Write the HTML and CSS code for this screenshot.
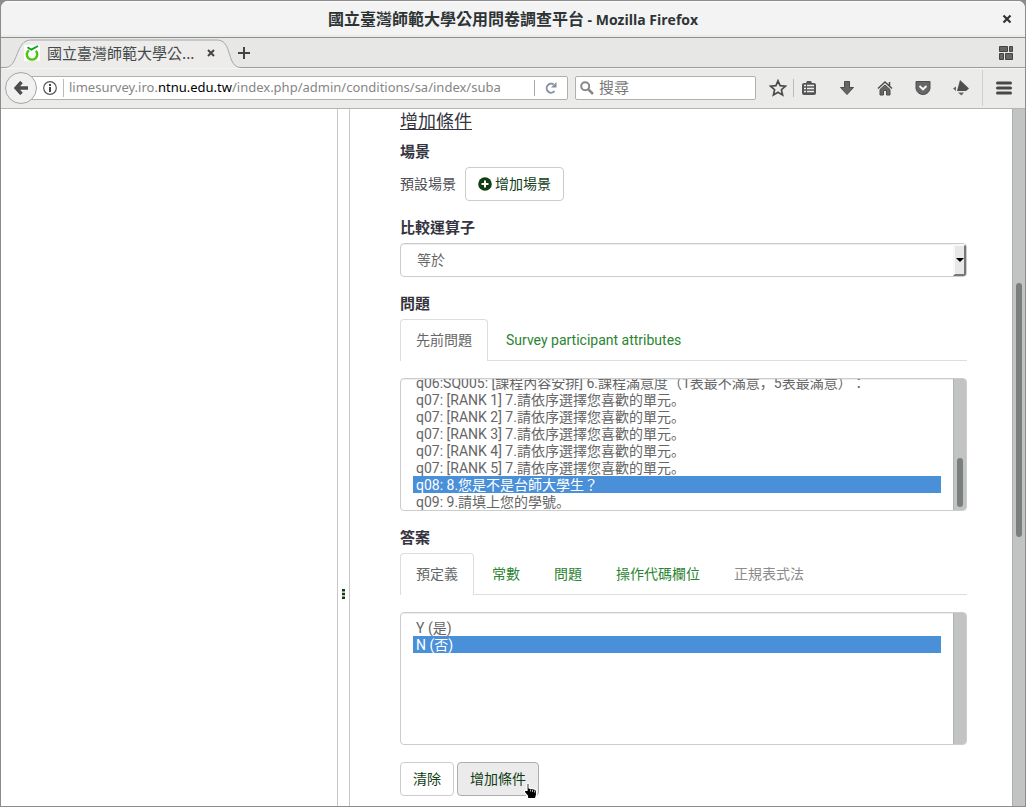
FILE: index.html
```html
<!DOCTYPE html>
<html lang="zh-Hant">
<head>
<meta charset="utf-8">
<title>國立臺灣師範大學公用問卷調查平台</title>
<link rel="stylesheet" href="styles.css">
</head>
<body>
<div class="window">
  <header class="titlebar">
    <span class="titlebar-text"><span class="site-name">國立臺灣師範大學公用問卷調查平台</span> - Mozilla Firefox</span>
    <button class="icon-btn window-close" aria-label="關閉視窗"><svg width="10" height="10" viewBox="0 0 10 10"><path d="M1.5 1.5l7 7M8.500 1.500l-7 7" stroke="#2e3436" stroke-width="2.200" fill="none"/></svg></button>
  </header>

  <div class="tabstrip">
    <div class="browser-tab">
      <svg class="tab-shape" width="236" height="30" viewBox="0 0 236 30" aria-hidden="true"><path d="M0 30V29.500C14 29.500 10 2 26 2H212C228 2 221 29.500 236 29.500V30Z" fill="#edeceb"/><path d="M0 29.500C14 29.500 10 2 26 2H212C228 2 221 29.500 236 29.500" fill="none" stroke="#a3a6ab"/></svg>
      <svg class="favicon" width="16" height="16" viewBox="0 0 16 16" aria-hidden="true"><rect width="16" height="16" fill="#fff"/><path d="M5 5.200A5.200 5.200 0 1 0 11.800 5.800" fill="none" stroke="#4cc50b" stroke-width="2.400"/><path d="M3.500 2.200L7.300 4.700L14 1" fill="none" stroke="#14a01e" stroke-width="1.900"/></svg>
      <span class="tab-title">國立臺灣師範大學公...</span>
      <button class="icon-btn tab-close" aria-label="關閉分頁"><svg width="8" height="8" viewBox="0 0 8 8"><path d="M1 1l6 6M7 1l-6 6" stroke="#444" stroke-width="2" fill="none"/></svg></button>
    </div>
    <button class="icon-btn new-tab" aria-label="開新分頁"><svg width="12" height="12" viewBox="0 0 12 12"><path d="M6 0v12M0 6h12" stroke="#444" stroke-width="2"/></svg></button>
    <button class="icon-btn tab-groups" aria-label="分頁群組"><svg width="14" height="14" viewBox="0 0 14 14" fill="#666" stroke="#444"><path d="M.5.5h8v5h-8zM10.500.5h3v5h-3zM.5 7.500h4v6h-4zM6.500 7.500h7v6h-7z"/></svg></button>
  </div>

  <nav class="toolbar">
    <button class="back" aria-label="上一頁"><svg width="14" height="14" viewBox="0 0 14 14"><path d="M7.500 1L2 7l5.500 6M2 7h12" fill="none" stroke="#4c4c4c" stroke-width="3.400"/></svg></button>
    <div class="urlbar">
      <button class="icon-btn" aria-label="網站資訊"><svg width="14" height="14" viewBox="0 0 14 14"><circle cx="7" cy="7" r="6.300" fill="none" stroke="#555" stroke-width="1.200"/><path d="M7 3v2M7 6v5" stroke="#444" stroke-width="2"/></svg></button>
      <div class="url" role="textbox" contenteditable="true" aria-label="網址" spellcheck="false">limesurvey.iro.<span class="domain">ntnu.edu.tw</span>/index.php/admin/conditions/sa/index/suba</div>
      <button class="icon-btn reload" aria-label="重新載入"><svg width="12" height="12" viewBox="0 0 12 12"><path d="M9.500 9.200A4.500 4.500 0 1 1 8.600 2.400" fill="none" stroke="#8590a0" stroke-width="1.900"/><path d="M11.500 0v5.500H6z" fill="#8590a0"/></svg></button>
    </div>
    <div class="search">
      <svg width="14" height="14" viewBox="0 0 14 14" aria-hidden="true"><circle cx="5.200" cy="5.200" r="4" fill="none" stroke="#888" stroke-width="2"/><path d="M8 8l5 5" stroke="#888" stroke-width="2.500"/></svg>
      <input type="search" placeholder="搜尋" aria-label="搜尋">
    </div>
    <div class="tools">
      <button class="icon-btn" aria-label="加入書籤"><svg width="18" height="18" viewBox="0 0 18 18"><path d="M9 1.800l2.100 4.900 5.300.5-4 3.500 1.200 5.200L9 13.200l-4.600 2.700 1.200-5.200-4-3.500 5.300-.5z" fill="none" stroke="#4c4c4c" stroke-width="1.700"/></svg></button>
      <button class="icon-btn ruled" aria-label="書籤清單"><svg width="16" height="16" viewBox="0 0 16 16"><path d="M3 3h2l1-2h4l1 2h2q2 0 2 2v8q0 2-2 2H3q-2 0-2-2V5q0-2 2-2z" fill="#555"/><path d="M3 5.500h2M6 5.500h7M3 8.500h2M6 8.500h7M3 11.500h2M6 11.500h7" stroke="#eee" stroke-width="1.700"/></svg></button>
      <button class="icon-btn" aria-label="下載"><svg width="16" height="16" viewBox="0 0 16 16"><path d="M5.500 1.500h5v6h4L8 14.500l-6.500-7h4z" fill="#666" stroke="#4c4c4c"/></svg></button>
      <button class="icon-btn" aria-label="首頁"><svg width="16" height="16" viewBox="0 0 16 16"><path d="M3 9.500L8 5l5 4.500v5.500H9.500V10.500h-3V15H3z" fill="#666" stroke="#4c4c4c"/><path d="M1 8.500L8 2l7 6.500M12.500 2v4" fill="none" stroke="#4c4c4c" stroke-width="1.500"/></svg></button>
      <button class="icon-btn" aria-label="Pocket"><svg width="16" height="16" viewBox="0 0 16 16"><path d="M1 1.500h14V8a7 6.500 0 0 1-14 0z" fill="#666" stroke="#4c4c4c"/><path d="M4.500 6L8 9.300 11.500 6" fill="none" stroke="#f2f2f2" stroke-width="2"/></svg></button>
      <button class="icon-btn" aria-label="附加元件"><svg width="18" height="16" viewBox="0 0 18 16"><path d="M8 0L17 8.500L14 11H5z" fill="#4f4f4f"/><path d="M1 8.500L4 6.500V11zM6 12.500h6L9.500 15.500z" fill="#666"/></svg></button>
      <button class="icon-btn menu" aria-label="選單"><svg width="16" height="14" viewBox="0 0 16 14"><path d="M1.500 2h13M1.500 7h13M1.500 12h13" stroke="#484848" stroke-width="3" stroke-linecap="round"/></svg></button>
    </div>
  </nav>

  <div class="page">
    <aside class="sidebar"></aside>
    <div class="splitter" role="separator" aria-orientation="vertical"><svg width="3" height="10" viewBox="0 0 3 10"><path d="M0 0h3v2.500H0zM0 3.800h3v2.500H0zM0 7.500h3V10H0z" fill="#0f3f17"/></svg></div>
    <main class="content">
      <h2 class="heading">增加條件</h2>
      <form class="form">
        <section class="group">
          <h3 class="label">場景</h3>
          <div class="scenario">
            <span>預設場景</span>
            <button type="button" class="btn"><svg width="14" height="14" viewBox="0 0 14 14" aria-hidden="true"><circle cx="7" cy="7" r="6.800" fill="#0f3d14"/><path d="M7 3.500v7M3.500 7h7" stroke="#fff" stroke-width="2"/></svg>增加場景</button>
          </div>
        </section>

        <section class="group">
          <label class="label" for="operator">比較運算子</label>
          <div class="control">
            <select id="operator" class="dropdown"><option>等於</option></select>
            <span class="arrow" aria-hidden="true"></span>
          </div>
        </section>

        <section class="group">
          <label class="label" for="questions">問題</label>
          <div class="tabs">
            <a class="tab active" href="#previous">先前問題</a>
            <a class="tab" href="#attributes">Survey participant attributes</a>
          </div>
          <div class="control spaced">
            <select id="questions" class="listbox" size="8" lang="ja">
              <option>q06:SQ005: [課程內容安排] 6.課程滿意度（1表最不滿意，5表最滿意）：</option>
              <option>q07: [RANK 1] 7.請依序選擇您喜歡的單元。</option>
              <option>q07: [RANK 2] 7.請依序選擇您喜歡的單元。</option>
              <option>q07: [RANK 3] 7.請依序選擇您喜歡的單元。</option>
              <option>q07: [RANK 4] 7.請依序選擇您喜歡的單元。</option>
              <option>q07: [RANK 5] 7.請依序選擇您喜歡的單元。</option>
              <option selected>q08: 8.您是不是台師大學生？</option>
              <option>q09: 9.請填上您的學號。</option>
            </select>
            <span class="track" aria-hidden="true"><span class="thumb"></span></span>
          </div>
        </section>

        <section class="group">
          <label class="label" for="answers">答案</label>
          <div class="tabs">
            <a class="tab active" href="#predefined">預定義</a>
            <a class="tab" href="#constant">常數</a>
            <a class="tab" href="#question">問題</a>
            <a class="tab" href="#token">操作代碼欄位</a>
            <a class="tab disabled" href="#regexp" aria-disabled="true">正規表式法</a>
          </div>
          <div class="control spaced">
            <select id="answers" class="listbox" size="7">
              <option>Y (是)</option>
              <option selected>N (否)</option>
            </select>
            <span class="track" aria-hidden="true"></span>
          </div>
        </section>

        <div class="actions">
          <button type="reset" class="btn">清除</button>
          <button type="button" class="btn hovered">增加條件<svg class="pointer" width="15" height="18" viewBox="0 0 15 18" aria-hidden="true"><path d="M4 1.500q1.200-1 2 .2V6l6 1.200q1.500.6 1.500 2.300V13l-1 3.500H4.500V14L1.500 10.500V8.500H4z" fill="#000" stroke="#fff" stroke-width="1.200"/><path d="M7.500 7.500v2M9.500 8v2M11.500 8.500v2" stroke="#fff" stroke-width=".7"/></svg></button>
        </div>
      </form>
    </main>
    <div class="page-track" aria-hidden="true"><span class="page-thumb"></span></div>
  </div>
</div>
<script src="app.js"></script>
</body>
</html>
```
FILE: styles.css
```css
* { box-sizing: border-box; }

body {
  margin: 0;
  height: 100vh;
  padding: 1px;
  overflow: hidden;
  background: #8c8c8c;
  font-family: Roboto, "Noto Sans CJK TC", sans-serif;
  font-size: 14px;
  line-height: 20px;
  color: #4d4d55;
}

button, input, select { font: inherit; color: inherit; }
svg { display: block; flex: none; }

.window {
  display: flex;
  flex-direction: column;
  height: 100%;
  border-radius: 7px 7px 0 0;
  overflow: hidden;
  background: #fff;
}

.icon-btn {
  display: flex;
  align-items: center;
  justify-content: center;
  flex: none;
  padding: 0;
  border: 0;
  background: none;
}

/* Browser chrome */
.titlebar {
  flex: none;
  display: grid;
  grid-template-columns: 36px 1fr 36px;
  align-items: center;
  height: 37px;
  background: linear-gradient(#fff 0, #f3f3f3 2px, #f3f3f3 33px, #e8e8e7 36px);
  border-bottom: 1px solid #8f8f8e;
}
.titlebar-text {
  grid-column: 2;
  text-align: center;
  white-space: nowrap;
  font-family: "Open Sans", "Noto Sans CJK TC", sans-serif;
  font-size: 14px;
  font-weight: 700;
  color: #2e3436;
}
.site-name { font-size: 16px; }

.tabstrip {
  flex: none;
  display: flex;
  align-items: center;
  height: 30px;
  padding: 0 12px 0 4px;
  background: #e7e7e6;
  border-bottom: 1px solid #9b9b9b;
}
.browser-tab {
  position: relative;
  display: flex;
  align-items: center;
  width: 232px;
  height: 30px;
  margin-top: 1px;
  padding-left: 19px;
}
.tab-shape { position: absolute; left: 0; top: 0; }
.favicon, .tab-title, .tab-close { position: relative; }
.tab-title {
  width: 152px;
  margin-left: 7px;
  white-space: nowrap;
  font-family: "Noto Sans CJK TC", sans-serif;
  font-size: 15px;
  color: #444a4c;
}
.tab-close { width: 24px; height: 24px; }
.new-tab { width: 14px; height: 14px; }
.tab-groups { margin-left: auto; }

.toolbar {
  flex: none;
  display: flex;
  align-items: center;
  height: 41px;
  padding: 0 11px 2px 4px;
  background: #ebebe9;
  border-top: 1px solid #f5f5f4;
  border-bottom: 1px solid #b5b5b2;
}
.back {
  position: relative;
  z-index: 1;
  display: flex;
  align-items: center;
  justify-content: center;
  flex: none;
  width: 32px;
  height: 32px;
  padding: 0;
  border: 1px solid #a5a5a4;
  border-radius: 50%;
  background: #f1f1f1;
}
.urlbar {
  flex: 1;
  min-width: 0;
  display: flex;
  align-items: center;
  height: 24px;
  margin-left: -8px;
  padding-left: 13px;
  background: #fff;
  border: 1px solid #b0b0ad;
  border-radius: 2px;
}
.url {
  flex: 1;
  min-width: 0;
  height: 18px;
  margin: 0 23px 0 6px;
  padding-left: 5px;
  border-left: 1px solid #bbb;
  overflow: hidden;
  white-space: nowrap;
  line-height: 17px;
  font-family: "Noto Sans", sans-serif;
  font-size: 13px;
  color: #858585;
}
.domain { color: #000; }
.reload {
  width: 33px;
  height: 16px;
  border-left: 1px solid #aaa;
}
.search {
  display: flex;
  align-items: center;
  gap: 5px;
  width: 181px;
  height: 24px;
  margin-left: 7px;
  padding-left: 4px;
  background: #fff;
  border: 1px solid #b0b0ad;
  border-radius: 2px;
}
.search input {
  flex: 1;
  min-width: 0;
  height: 20px;
  padding: 0;
  border: 0;
  outline: 0;
  background: none;
  font-size: 15px;
}
.search input::placeholder { color: #777; }
.tools {
  display: flex;
  margin-left: 7px;
}
.tools .icon-btn { width: 38px; height: 36px; }
.tools .icon-btn:first-child { width: 30px; }
.tools .ruled {
  width: 32px;
  margin-right: 3px;
  background: linear-gradient(#bbb, #bbb) 0 center / 1px 18px no-repeat;
}
.tools .menu {
  width: 32px;
  margin-left: 2px;
  padding-left: 10px;
  border-left: 1px solid #d0d0cf;
}

/* Web page */
.page {
  flex: 1;
  min-height: 0;
  display: flex;
  overflow: hidden;
}
.sidebar { flex: none; width: 336px; }
.splitter {
  flex: none;
  display: flex;
  justify-content: center;
  width: 13px;
  padding-top: 480px;
  border: solid #c8c8c8;
  border-width: 0 1px;
}
.content {
  flex: 1;
  min-width: 0;
  padding: 0 45px 0 50px;
  overflow: hidden;
}
.page-track {
  flex: none;
  width: 13px;
  padding: 174px 2px 0 3px;
  background: #c1c4c3;
  border-left: 1px solid #acafae;
}
.page-thumb {
  display: block;
  width: 6px;
  height: 254px;
  border-radius: 3px;
  background: #7a7e7f;
}

.heading {
  margin: 0 0 8px;
  font-size: 18px;
  font-weight: 400;
  line-height: 25px;
  text-decoration: underline;
  color: #35343f;
}
.form {
  display: flex;
  flex-direction: column;
  gap: 17px;
}
.group {
  display: flex;
  flex-direction: column;
}
.label {
  margin: 0 0 5px;
  font-size: 15px;
  font-weight: 700;
  line-height: 20px;
  color: #35343f;
}
.scenario {
  display: flex;
  align-items: center;
  gap: 9px;
}
.btn {
  position: relative;
  display: flex;
  align-items: center;
  gap: 3px;
  height: 34px;
  padding: 0 12px;
  border: 1px solid #ccc;
  border-radius: 4px;
  background: #fff;
  color: #0f3d14;
}
.btn.hovered {
  background: #ebebeb;
  border-color: #adadad;
}
.pointer {
  position: absolute;
  right: 0;
  bottom: -5px;
}

.control {
  display: flex;
  border: 1px solid #ccc;
  border-radius: 4px;
  overflow: hidden;
  background: #fff;
  box-shadow: inset 0 1px 1px #00000013;
  color: #666;
}
.spaced { margin-top: 17px; }
.dropdown {
  flex: 1;
  height: 32px;
  padding: 0 16px;
  appearance: none;
  border: 0;
  background: none;
}
.arrow {
  display: flex;
  align-items: center;
  justify-content: center;
  width: 13px;
  background: #e8e8e7;
  border: 2px solid;
  border-color: #f8f8f8 #777 #777 #f8f8f8;
}
.arrow::before {
  content: "";
  border: solid transparent;
  border-width: 4px 4px 0;
  border-top-color: #000;
}

.tabs {
  display: flex;
  gap: 2px;
  border-bottom: 1px solid #ddd;
}
.tab {
  height: 41px;
  padding: 10px 15px;
  border: 1px solid transparent;
  border-bottom: 0;
  border-radius: 4px 4px 0 0;
  text-decoration: none;
  color: #2b8431;
}
.tab.active {
  height: 42px;
  margin-bottom: -1px;
  border-color: #ddd;
  background: #fff;
  color: #666;
}
.tab.disabled { color: #8c8c8c; }

.listbox {
  flex: 1;
  min-width: 0;
  height: 131px;
  padding: 6px 12px 0;
  border: 0;
  border-radius: 0;
  outline: 0;
  background: none;
  font-family: Roboto, "Noto Sans CJK JP", sans-serif;
  text-spacing-trim: space-all;
  scrollbar-width: none;
}
/* Rows overlap by 2px so the text sits in the middle of its 17px band. */
.listbox option {
  height: 19px;
  min-height: 19px;
  margin-top: -2px;
  padding: 0 3px;
  overflow: hidden;
  color: #666;
}
.listbox option:checked {
  background: linear-gradient(#4a90d9, #4a90d9) 0 2px / 100% 17px no-repeat transparent;
  color: #fff;
  -webkit-text-fill-color: #fff;
}
.track {
  flex: none;
  display: flex;
  align-items: flex-end;
  width: 13px;
  padding: 0 3px 3px;
  background: #c1c4c3;
  border-left: 1px solid #b0b3b2;
}
.thumb {
  width: 6px;
  height: 49px;
  border-radius: 3px;
  background: #7a7e7f;
}
.actions {
  display: flex;
  gap: 3px;
}
```
FILE: app.js
```js
// Open the question list at its last entries.
const questions = document.getElementById("questions");
window.addEventListener("load", () => {
  questions.scrollTop = questions.scrollHeight;
});
```
